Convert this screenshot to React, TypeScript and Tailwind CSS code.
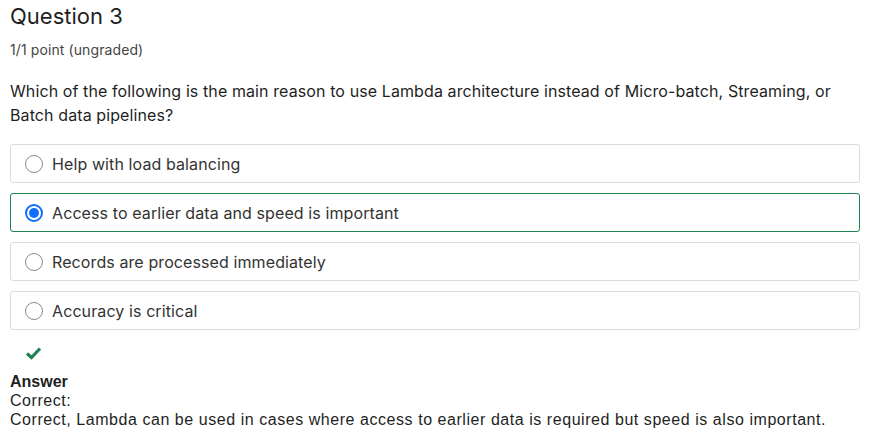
import React from "react";

const options = [
  "Help with load balancing",
  "Access to earlier data and speed is important",
  "Records are processed immediately",
  "Accuracy is critical",
];

function Radio({ checked }: { checked: boolean }) {
  if (checked) {
    return (
      <span className="flex h-[18px] w-[18px] shrink-0 items-center justify-center rounded-full border-2 border-[#0f6efd] bg-white">
        <span className="h-[10px] w-[10px] rounded-full bg-[#0f6efd]" />
      </span>
    );
  }
  return <span className="h-[18px] w-[18px] shrink-0 rounded-full border border-[#8a8a8a] bg-white" />;
}

export default function App() {
  const selected = 1;
  return (
    <div className="min-h-screen bg-white px-[10px] font-['Inter',sans-serif] tracking-[0.1px] text-[#333]">
      <h2 className="pt-[2px] text-[22px] leading-[28px] tracking-normal text-[#1f1f1f]">Question 3</h2>
      <p className="mt-[11px] text-[14px] leading-[18px] text-[#454545]">1/1 point (ungraded)</p>
      <p className="mt-[20px] w-[830px] text-[16px] leading-[24px] text-[#1f1f1f]">
        Which of the following is the main reason to use Lambda architecture instead of Micro-batch, Streaming, or
        Batch data pipelines?
      </p>
      <div className="mt-[17px] flex w-[850px] flex-col gap-[10px]">
        {options.map((o, i) => (
          <div
            key={o}
            className={`flex h-[39px] items-center gap-[9px] rounded-[3px] border pl-[14px] ${
              i === selected ? "border-[#1f8354]" : "border-[#dcdcdc]"
            }`}
          >
            <Radio checked={i === selected} />
            <span className="text-[16px] text-[#333]">{o}</span>
          </div>
        ))}
      </div>
      <div className="pl-[15px] pt-[16px]">
        <svg width="17" height="14" viewBox="0 0 17 14">
          <path d="M2 7.5 L6.5 11.5 L15 2.5" fill="none" stroke="#1f8354" strokeWidth="3.2" />
        </svg>
      </div>
      <div className="mt-[12px] font-['Liberation_Sans',Arial,sans-serif] text-[16px] leading-[19px] text-[#1f1f1f]">
        <div className="font-bold tracking-normal">Answer</div>
        <div className="tracking-[0.55px]">Correct:</div>
        <div className="tracking-[0.55px]">
          Correct, Lambda can be used in cases where access to earlier data is required but speed is also important.
        </div>
      </div>
    </div>
  );
}
